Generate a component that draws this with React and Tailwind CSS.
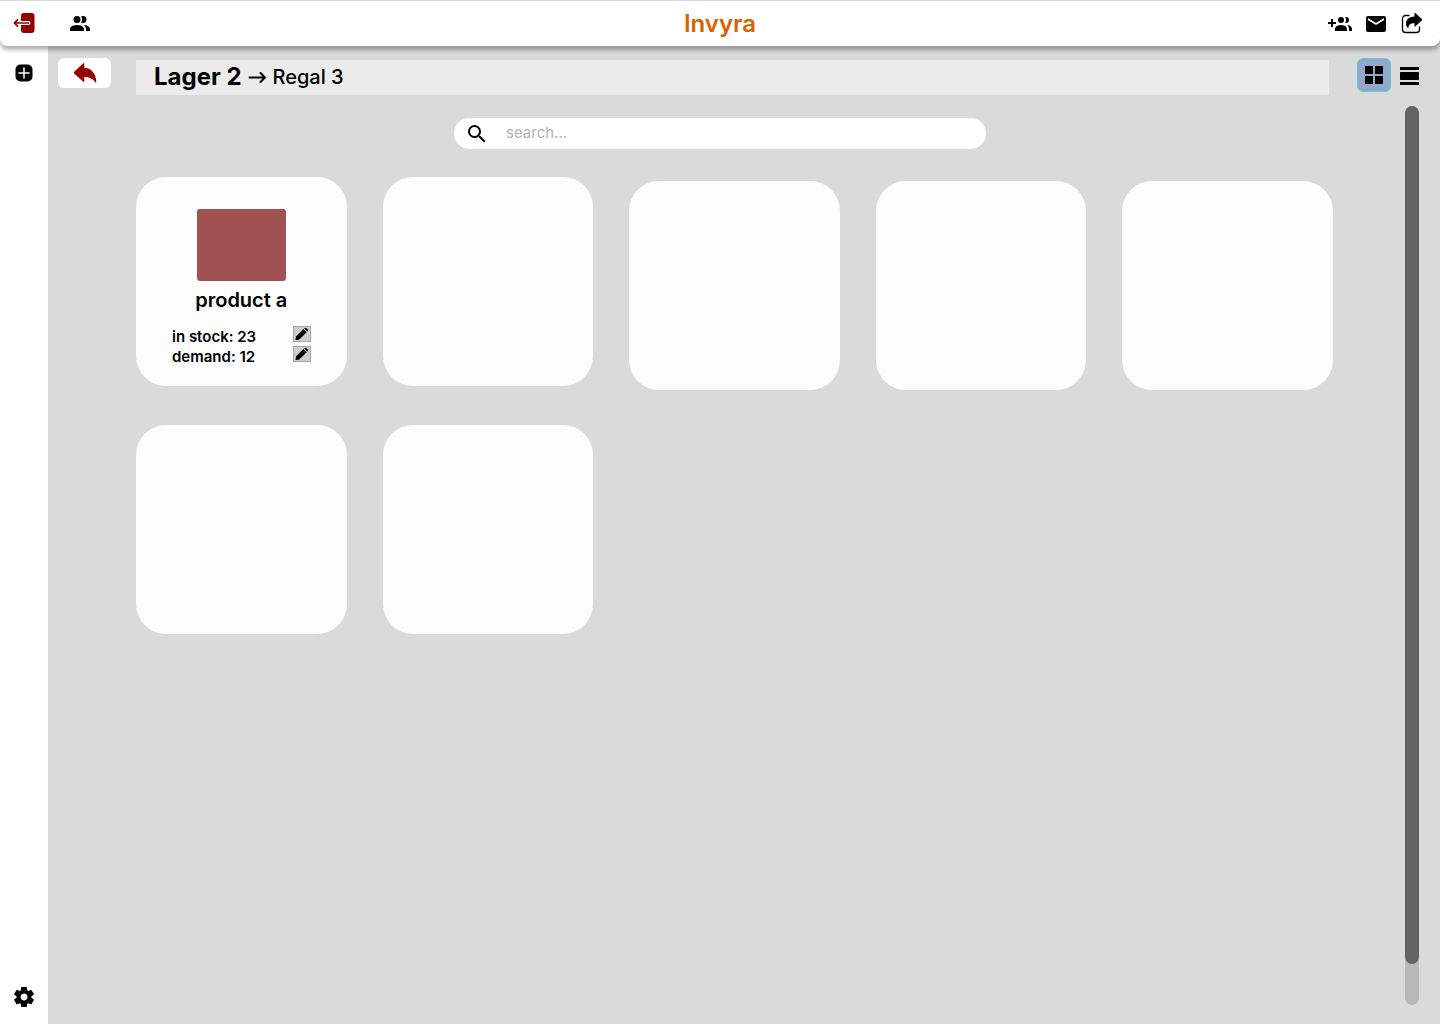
const paths = {
  people:
    "M16 17V19H2V17S2 13 9 13 16 17 16 17M12.5 7.5A3.5 3.5 0 1 0 9 11A3.5 3.5 0 0 0 12.5 7.5M15.94 13A5.32 5.32 0 0 1 18 17V19H22V17S22 13.37 15.94 13M15 4A3.39 3.39 0 0 0 13.07 4.59A5 5 0 0 1 13.07 10.41A3.39 3.39 0 0 0 15 11A3.5 3.5 0 0 0 15 4Z",
  addPeople:
    "M19 17V19H7V17S7 13 13 13 19 17 19 17M16 8A3 3 0 1 0 13 11A3 3 0 0 0 16 8M19.2 13.06A5.6 5.6 0 0 1 21 17V19H24V17S24 13.55 19.2 13.06M18 5A2.91 2.91 0 0 0 17.11 5.14A5 5 0 0 1 17.11 10.86A2.91 2.91 0 0 0 18 11A3 3 0 0 0 18 5M8 10H5V7H3V10H0V12H3V15H5V12H8Z",
  mail: "M20 4H4c-1.1 0-1.99.9-1.99 2L2 18c0 1.1.9 2 2 2h16c1.1 0 2-.9 2-2V6c0-1.1-.9-2-2-2zm0 4l-8 5-8-5V6l8 5 8-5v2z",
  settings:
    "M9.25 22l-.4-3.2q-.325-.125-.612-.3t-.563-.375L4.7 19.375l-2.75-4.75 2.575-1.95Q4.5 12.5 4.5 12.338v-.675q0-.163.025-.338L1.95 9.375l2.75-4.75 2.975 1.25q.275-.2.575-.375t.6-.3l.4-3.2h5.5l.4 3.2q.325.125.613.3t.562.375l2.975-1.25 2.75 4.75-2.575 1.95q.025.175.025.338v.674q0 .163-.05.338l2.575 1.95-2.75 4.75-2.95-1.25q-.275.2-.575.375t-.6.3l-.4 3.2h-5.5zm2.8-6.5q1.45 0 2.475-1.025T15.55 12t-1.025-2.475T12.05 8.5q-1.475 0-2.488 1.025T8.55 12t1.013 2.475T12.05 15.5z",
  grid: "M3 11h8V3H3zm0 10h8v-8H3zm10 0h8v-8h-8zm0-18v8h8V3z",
  list: "M2 21h19v-3H2zM20 8H3c-.55 0-1 .45-1 1v6c0 .55.45 1 1 1h17c.55 0 1-.45 1-1V9c0-.55-.45-1-1-1zM2 3v3h19V3z",
  search:
    "M15.5 14h-.79l-.28-.27A6.471 6.471 0 0 0 16 9.5 6.5 6.5 0 1 0 9.5 16c1.61 0 3.09-.59 4.23-1.57l.27.28v.79l5 4.99L20.49 19l-4.99-5zm-6 0C7.01 14 5 11.99 5 9.5S7.01 5 9.5 5 14 7.01 14 9.5 11.99 14 9.5 14z",
  reply:
    "M10.300 2.300Q11.300 1.600 11.300 3V6.800C18 7.200 23 12 23.300 21Q23.200 22.200 22.300 21.300C19.500 17.500 16 16 11.300 16V20Q11.300 21.600 10.200 20.700L1.200 12.400Q.4 11.500 1.200 10.700Z",
};

function Icon({ name, className = "size-6" }) {
  return (
    <svg viewBox="0 0 24 24" fill="currentColor" className={className} aria-hidden="true">
      <path d={paths[name]} />
    </svg>
  );
}

function LogoutIcon() {
  return (
    <svg viewBox="0 0 24 24" className="size-6" fill="none" aria-hidden="true">
      <rect x="9" y="1" width="13.500" height="20" rx="3" fill="#960000" />
      <path d="M16.500 11H3" stroke="#fff" strokeWidth="4" strokeLinecap="round" />
      <path d="M16.500 11H3M5.500 7.800L2.300 11L5.500 14.200" stroke="#960000" strokeWidth="1.700" strokeLinecap="round" strokeLinejoin="round" />
    </svg>
  );
}

function AddIcon() {
  return (
    <svg viewBox="0 0 24 24" className="size-6" aria-hidden="true">
      <rect x="3.500" y="3.500" width="17" height="17" rx="5" />
      <path d="M12 7v10M7 12h10" stroke="#fff" strokeWidth="1.500" strokeLinecap="round" />
    </svg>
  );
}

function ShareIcon() {
  return (
    <svg viewBox="0 0 24 24" className="size-6" aria-hidden="true">
      <path d="M9.500 3.500H5.500a3 3 0 0 0-3 3V17.500a3 3 0 0 0 3 3H16.500a3 3 0 0 0 3-3V14.500" fill="none" stroke="currentColor" strokeWidth="1.300" />
      <path d="M14.500 .8Q14.500 .3 15 .7L22 7.300Q22.500 7.800 22 8.300L15 14.700Q14.500 15.100 14.500 14.500V11.300C10 11.200 8.500 13 8.300 16.500C4.500 13 4.800 5 14.500 4.500Z" />
    </svg>
  );
}

function PencilIcon() {
  return (
    <svg viewBox="0 0 16 14" className="h-3.5 w-4" aria-hidden="true">
      <path d="M1.500 13L2 9.500L9.500 2L12.700 5.200L5 12.700Z" />
      <path d="M10.200 1.400Q11.400 .2 12.600 1.200L13.600 2.200Q14.500 3.400 13.400 4.500Z" />
    </svg>
  );
}

function StockLine({ label, value }) {
  return (
    <div className="flex h-5 items-start justify-between">
      <span>
        {label}: {value}
      </span>
      <button
        type="button"
        aria-label={`Edit ${label}`}
        className="flex h-4 w-[18px] items-center justify-center border border-[#a6a6a6] bg-[#cecece]"
      >
        <PencilIcon />
      </button>
    </div>
  );
}

function ProductCard({ product, className }) {
  return (
    <article className={`h-[209px] rounded-[30px] bg-[#fdfdfd] ${className}`}>
      {product && (
        <div className="flex flex-col items-center pt-8">
          <div className="h-[72px] w-[89px] rounded-[3px] bg-[#a05252]" />
          <h2 className="mt-[3px] text-xl leading-8 font-semibold">{product.name}</h2>
          <div className="mt-[10px] w-full px-9 text-[15px] leading-[22px] font-semibold">
            <StockLine label="in stock" value={product.stock} />
            <StockLine label="demand" value={product.demand} />
          </div>
        </div>
      )}
    </article>
  );
}

const products = [{ name: "product a", stock: 23, demand: 12 }, null, null, null, null, null, null];

export default function App() {
  return (
    <div className="flex min-h-screen flex-col bg-[#dadada] font-['Inter',sans-serif] text-black">
      <header className="z-10 grid h-[46px] grid-cols-3 items-center rounded-b-lg border-t border-[#d9d9d9] bg-white shadow-[0_4px_4px_rgba(0,0,0,0.3)]">
        <div className="flex items-center gap-8 pt-px pl-3">
          <button type="button" aria-label="Log out">
            <LogoutIcon />
          </button>
          <button type="button" aria-label="Users">
            <Icon name="people" />
          </button>
        </div>
        <h1 className="text-center text-2xl font-semibold text-[#d96200]">Invyra</h1>
        <div className="flex items-center justify-end gap-3 pr-4">
          <button type="button" aria-label="Add users">
            <Icon name="addPeople" />
          </button>
          <button type="button" aria-label="Mail">
            <Icon name="mail" />
          </button>
          <button type="button" aria-label="Share">
            <ShareIcon />
          </button>
        </div>
      </header>

      <div className="flex grow">
        <aside className="-mt-2 flex w-12 shrink-0 flex-col items-center justify-between bg-white pt-[23px] pb-[15px]">
          <button type="button" aria-label="Add">
            <AddIcon />
          </button>
          <button type="button" aria-label="Settings">
            <Icon name="settings" />
          </button>
        </aside>

        <main className="flex grow flex-col pt-3 pr-[21px] pb-[19px] pl-2.5">
          <div className="flex items-start">
            <button
              type="button"
              aria-label="Back"
              className="flex h-[30px] w-[53px] items-center justify-center rounded-md bg-white text-[#960000]"
            >
              <Icon name="reply" />
            </button>
            <nav aria-label="Location" className="mt-0.5 ml-[25px] flex h-[35px] grow items-center gap-1.5 bg-[#ebebeb] pb-px pl-[18px]">
              <a href="#lager" className="text-2xl font-bold">
                Lager 2
              </a>
              <svg viewBox="0 0 19 16" className="h-4 w-[19px]" fill="none" stroke="currentColor" strokeWidth="2" strokeLinecap="round" aria-hidden="true">
                <path d="M1.500 8.500H17M12.500 4L17 8.500L12.500 13" />
              </svg>
              <a href="#regal" className="text-xl font-medium">
                Regal 3
              </a>
            </nav>
            <div className="ml-7 flex items-center gap-[7px]">
              <button
                type="button"
                aria-label="Grid view"
                aria-pressed="true"
                className="flex size-[34px] items-center justify-center rounded-md border border-[#5fcfd4] bg-[#91a8cc]"
              >
                <Icon name="grid" />
              </button>
              <button type="button" aria-label="List view" aria-pressed="false" className="-mr-[3px] pt-0.5">
                <Icon name="list" />
              </button>
            </div>
          </div>

          <div className="mt-[11px] flex grow">
            <div className="flex grow flex-col pr-[72px] pl-[78px]">
              <label className="mt-3 mr-[29px] flex h-[31px] w-[532px] items-center gap-[17px] self-center rounded-full bg-white pl-[11px]">
                <Icon name="search" />
                <input
                  type="search"
                  aria-label="Search"
                  placeholder="search..."
                  className="grow bg-transparent text-[15px] outline-none placeholder:text-[#b3b3b3]"
                />
              </label>
              <section aria-label="Products" className="mt-7 grid grid-cols-5 gap-x-9 gap-y-[35px]">
                {products.map((product, i) => (
                  <ProductCard
                    key={i}
                    product={product}
                    className={i > 1 && i < 5 ? "mt-1" : i < 2 ? "mb-1" : ""}
                  />
                ))}
              </section>
            </div>
            <div className="flex w-3.5 flex-col rounded-full bg-[#b8b8b8]">
              <div className="h-[858px] rounded-full bg-[#636363]" />
            </div>
          </div>
        </main>
      </div>
    </div>
  );
}
